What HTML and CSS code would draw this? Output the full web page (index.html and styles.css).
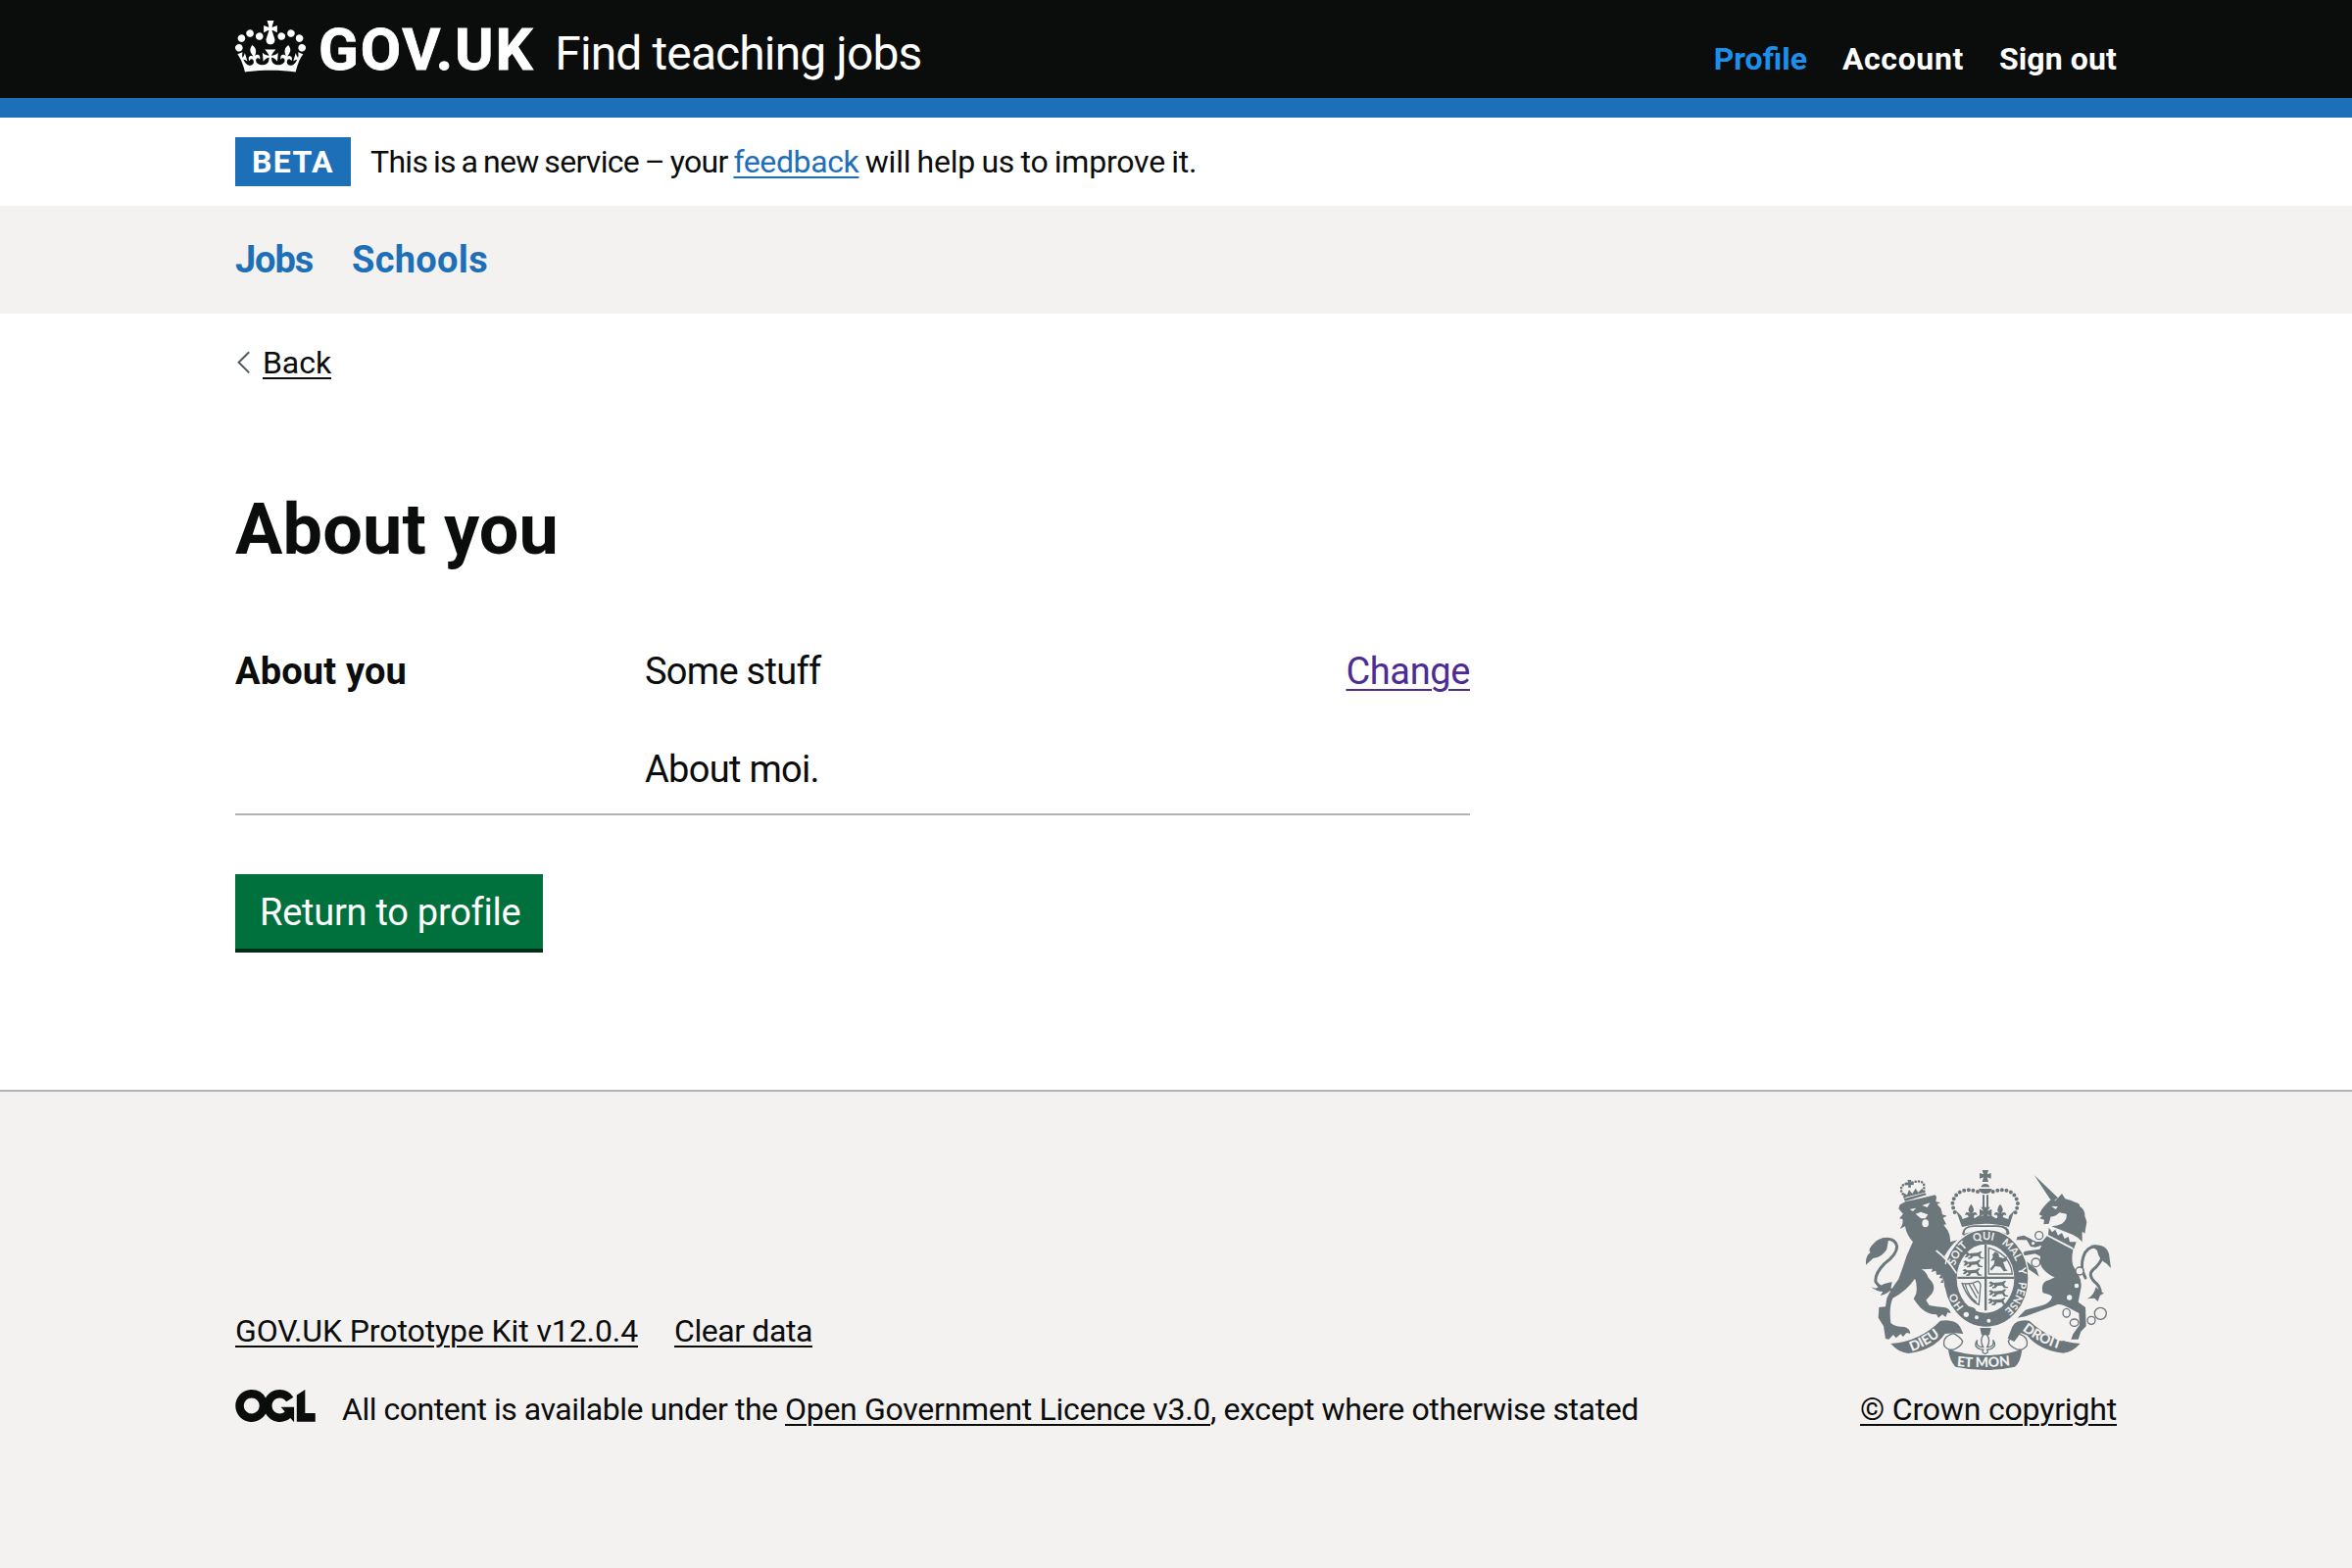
FILE: index.html
```html
<!DOCTYPE html>
<html lang="en">
<head>
<meta charset="utf-8">
<title>About you – Find teaching jobs</title>
<link rel="stylesheet" href="styles.css">
</head>
<body>
<header class="header">
  <div class="container header-inner">
    <a class="logo" href="#">
      <svg class="crown" viewBox="0 0 132 97" aria-hidden="true"><path fill="currentColor" fill-rule="evenodd" d="M25 30.2c3.5 1.5 7.7-.2 9.1-3.7 1.5-3.6-.2-7.8-3.9-9.2-3.6-1.4-7.6.3-9.1 3.9-1.4 3.5.3 7.5 3.9 9zM9 39.5c3.6 1.5 7.8-.2 9.2-3.7 1.5-3.6-.2-7.8-3.9-9.1-3.6-1.5-7.6.2-9.1 3.8-1.4 3.5.3 7.5 3.8 9zM4.4 57.2c3.5 1.5 7.7-.2 9.1-3.8 1.5-3.6-.2-7.7-3.9-9.1-3.5-1.5-7.6.3-9.1 3.8-1.4 3.5.3 7.6 3.9 9.1zm38.3-21.4c3.5 1.5 7.7-.2 9.1-3.8 1.5-3.6-.2-7.7-3.9-9.1-3.6-1.5-7.6.3-9.1 3.8-1.3 3.6.4 7.7 3.9 9.1zm64.4-5.6c-3.6 1.5-7.8-.2-9.1-3.7-1.5-3.6.2-7.8 3.8-9.2 3.6-1.4 7.7.3 9.2 3.9 1.3 3.5-.4 7.5-3.9 9zm15.9 9.3c-3.6 1.5-7.7-.2-9.1-3.7-1.5-3.6.2-7.8 3.7-9.1 3.6-1.5 7.7.2 9.2 3.8 1.5 3.5-.3 7.5-3.8 9zm4.7 17.7c-3.6 1.5-7.8-.2-9.2-3.8-1.5-3.6.2-7.7 3.9-9.1 3.6-1.5 7.7.3 9.2 3.8 1.3 3.5-.4 7.6-3.9 9.1zM89.3 35.8c-3.6 1.5-7.8-.2-9.2-3.8-1.4-3.6.2-7.7 3.9-9.1 3.6-1.5 7.7.3 9.2 3.8 1.4 3.6-.3 7.7-3.9 9.1zM69.7 17.7l8.9 4.7V9.3l-8.9 2.8c-.2-.3-.5-.6-.9-.9L72.4 0H59.6l3.5 11.2c-.3.3-.6.5-.9.9l-8.8-2.8v13.1l8.8-4.7c.3.3.6.7.9.9l-5 15.4v.1c-.2.8-.4 1.6-.4 2.4 0 4.1 3.1 7.5 7 8.1h.2c.3 0 .7.1 1 .1.4 0 .7 0 1-.1h.2c4-.6 7.1-4.1 7.1-8.1 0-.8-.1-1.7-.4-2.4V34l-5.1-15.4c.4-.2.7-.6 1-.9zM66 92.8c16.9 0 32.8 1.1 47.1 3.2 4-16.9 8.9-26.7 14-33.5l-9.6-3.4c1 4.9 1.1 7.2 0 10.2-1.5-1.4-3-4.3-4.2-8.7L108.6 76c2.8-2 5-3.2 7.5-3.3-4.4 9.4-10 11.9-13.6 11.2-4.3-.8-6.3-4.6-5.6-7.9 1-4.7 5.7-5.9 8-.5 4.3-8.7-3-11.4-7.6-8.8 7.1-7.2 7.9-13.5 2.1-21.1-8 6.1-8.1 12.3-4.5 20.8-4.7-5.4-12.1-2.5-9.5 6.2 3.4-5.2 7.9-2 7.2 3.1-.6 4.3-6.4 7.8-13.5 7.2-10.3-.9-10.9-8-11.2-13.8 2.5-.5 7.1 1.8 11 7.3L80.2 60c-4.1 4.4-8 5.3-12.3 5.4 1.4-4.4 8-11.6 8-11.6H55.5s6.4 7.2 7.9 11.6c-4.2-.1-8-1-12.3-5.4l1.4 16.4c3.9-5.5 8.5-7.7 10.9-7.3-.3 5.8-.9 12.8-11.1 13.8-7.2.6-12.9-2.9-13.5-7.2-.7-5 3.8-8.3 7.1-3.1 2.7-8.7-4.6-11.6-9.4-6.2 3.7-8.5 3.6-14.7-4.6-20.8-5.8 7.6-5 13.9 2.2 21.1-4.7-2.6-11.9.1-7.7 8.8 2.3-5.5 7.1-4.2 8.1.5.7 3.3-1.3 7.1-5.7 7.9-3.5.7-9-1.8-13.5-11.2 2.5.1 4.7 1.3 7.5 3.3l-4.7-15.4c-1.2 4.4-2.7 7.2-4.3 8.7-1.1-3-.9-5.3 0-10.2l-9.5 3.4c5 6.9 9.9 16.7 14 33.5 14.8-2.1 30.8-3.2 47.7-3.2z"/></svg>
      <span class="logo-text">GOV.UK</span>
      <span class="service">Find teaching jobs</span>
    </a>
    <nav class="account-nav">
      <a class="current" href="#">Profile</a>
      <a class="account" href="#">Account</a>
      <a href="#">Sign out</a>
    </nav>
  </div>
</header>

<div class="container phase">
  <strong class="tag">BETA</strong>
  <p class="phase-text"><span class="intro">This is a new service – your </span><a href="#">feedback</a><span class="outro"> will help us to improve it.</span></p>
</div>

<nav class="primary">
  <div class="container primary-inner">
    <a class="jobs" href="#">Jobs</a>
    <a class="schools" href="#">Schools</a>
  </div>
</nav>

<main class="container main">
  <div class="back">
    <svg class="chevron" viewBox="0 0 14 24" aria-hidden="true"><path d="M12.2 1.2 1.6 11.8 12.2 22.4" fill="none" stroke="#505a5f" stroke-width="2"/></svg>
    <a href="#">Back</a>
  </div>
  <h1>About you</h1>
  <dl class="summary">
    <dt>About you</dt>
    <dd class="value"><p>Some stuff</p><p>About moi.</p></dd>
    <dd class="action"><a href="#">Change</a></dd>
  </dl>
  <a class="button" href="#">Return to profile</a>
</main>

<footer class="footer">
  <div class="container footer-inner">
    <div class="meta">
      <div class="links">
        <a class="kit" href="#">GOV.UK Prototype Kit v12.0.4</a>
        <a class="clear" href="#">Clear data</a>
      </div>
      <div class="licence">
        <svg class="ogl" viewBox="0 0 483.2 195.7" aria-hidden="true"><path fill="currentColor" d="M421.5 142.8V.1l-50.7 32.3v161.1h112.4v-50.7zm-122.3-9.6A47.12 47.12 0 0 1 221 97.8c0-26 21.1-47.1 47.1-47.1 16.7 0 31.4 8.7 39.7 21.8l42.7-27.2A97.63 97.63 0 0 0 268.1 0c-36.5 0-68.3 20.1-85.1 49.7A98 98 0 0 0 97.8 0C43.9 0 0 43.9 0 97.8s43.9 97.8 97.8 97.8c36.5 0 68.3-20.1 85.1-49.7a97.76 97.76 0 0 0 149.6 25.4l19.4 22.2h3v-87.8h-80l24.3 27.5zM97.8 145c-26 0-47.1-21.1-47.1-47.1s21.1-47.1 47.1-47.1 47.1 21.1 47.1 47.1S123.8 145 97.8 145"/></svg>
        <p><span class="avail">All content is available under the </span><a class="ogl-link" href="#">Open Government Licence v3.0</a><span class="except">, except where otherwise stated</span></p>
      </div>
    </div>
    <div class="copyright">
      <svg class="crest" viewBox="72 42 750 612" aria-hidden="true">
        <defs>
          <path id="garter" d="M440 491A101 118 0 0 1 440 255A101 118 0 0 1 440 491"/>
          <path id="dieu" d="M212 597Q275 575 322 528"/>
          <path id="droit" d="M550 532Q600 572 680 594"/>
          <path id="mon" d="M350 642Q436 650 530 638"/>
          <path id="passant" d="M0 8q4-8 10-4l4 3 26-2 10-5 3 2-6 8 4 8 8 2v3h-12l-6-8-14 1-6 7-10 1v-4l7-3-2-5-9 7-7-1 7-8z"/>
          <path id="lis" d="M0-22q-15 17-3 28-14-9-16 7 8-6 11 3l-3 8h22l-3-8q3-9 11-3-2-16-16-7 12-11-3-28z"/>
        </defs>
        <g class="ink">
          <!-- central crown -->
          <path d="M428 42h19l-4 13 12-4v17l-12-4 4 14h-19l4-14-12 4V51l12 4z"/>
          <path d="M424 94a14 14 0 0 1 27 0zM417 99h41q-2 15-20 15t-21-15zM429 118h6v40h-6zM441 118h6v40h-6z"/>
          <g class="beads">
            <path d="M414 108Q388 98 366 106 340 118 337 146 340 166 350 182"/>
            <path d="M461 108Q487 98 509 106 534 118 537 146 534 166 524 182"/>
          </g>
          <path d="M348 166 366 216Q438 196 510 216L526 166 510 182 508 192 490 186 470 190 454 180 438 184 420 180 404 190 384 186 368 192 364 182z"/>
          <use href="#lis" x="394" y="168"/><use href="#lis" x="483" y="168"/>
          <path d="M424 155h28l-8 12 13-6v22l-13-5 6 14h-24l6-14-12 5v-22l12 6z"/>
          <!-- lion -->
          <g class="beads small"><path d="M190 124 179 104Q180 84 202 83M214 80Q244 70 250 88L250 112"/></g>
          <path d="M188 130 254 112 257 118 192 137zM199 72 211 72 209 80 218 78 218 88 209 87 210 95 201 95 202 88 194 88 195 79 202 80z"/>
          <path d="M190 126 186 112 198 118 204 102 214 114 224 98 232 110 244 98 252 110z"/>
          <path d="M172 160 176 148 194 138 240 128 284 118 288 124 286 138 300 142 290 146 302 160 306 178 320 182 308 188 318 208 310 210 322 226Q332 244 330 262L352 256Q334 272 322 290L312 306 330 330Q344 348 344 376L348 392 338 384 334 398 326 386 316 402 312 388 300 386 308 374 296 372 302 362 288 362 286 350 272 354 276 344 242 346Q256 352 262 370L274 384Q286 402 274 420L256 440 266 456Q290 460 310 462 328 464 332 480L322 478 316 492 306 484 294 494 288 484Q262 484 240 464 228 452 218 436L226 420Q230 392 222 374 196 412 154 434 142 462 148 510 160 522 190 522 206 526 208 542L196 540 186 552 178 544 164 556 156 546 142 560 132 558 126 520 110 494 112 462 132 460 136 434Q148 408 172 376L186 336Q196 300 216 262 196 240 192 214L176 222Q188 206 184 192L174 190 186 176z"/>
          <path class="cord" d="M150 408Q116 408 102 384 98 360 129 328 167 300 167 276 163 254 139 253 119 253 105 267"/>
          <path d="M142 250Q116 246 96 266 76 286 86 294 70 304 72 332L94 312Q122 308 136 284zM88 400 102 404 128 390 152 384 148 406Q140 422 116 426L124 414Q104 414 88 400z"/>
          <!-- unicorn -->
          <path d="M587 57 660 127 642 140z"/>
          <path d="M672 114 682 130Q700 134 712 140 728 144 726 152 744 164 742 182L748 200 742 236 734 230 734 262 722 250 706 240 640 214Q658 212 672 206 690 192 686 176L664 172Q652 186 638 184L632 206 616 208 618 194 604 190 612 182 602 178Q610 160 622 148L636 134 652 136z"/>
          <path d="M626 244 706 286Q700 316 706 334L724 366Q734 384 730 404L722 446 744 462 746 520 730 536 722 560 700 560 706 544 726 516 724 480 690 462Q664 448 652 456L560 490 536 494 560 470 612 456Q638 448 642 430 640 424 614 418 604 384 634 378L650 370Q630 362 614 344 602 330 606 306L590 298 556 304 560 318 594 346 602 368 586 356 568 344 550 322 546 300 560 290 604 284 610 272 590 278 576 276 564 256 532 256 536 246 556 242 576 252 590 262 612 260z"/>
          <path class="cord" d="M744 372Q726 340 738 306 748 276 776 276 804 290 796 308 788 330 768 346 750 362 772 384 790 396 790 420"/>
          <path d="M760 272Q808 266 816 298L822 342 808 328Q784 316 780 288zM748 436Q768 430 776 400L788 412 802 420 790 422 782 444 772 434z"/>
          <path d="M366 238Q368 212 402 211H478Q510 212 512 236L498 246H376z"/>
        </g>
        <!-- garter and shield -->
        <ellipse class="band" cx="440" cy="373" rx="130" ry="150"/>
        <ellipse class="paper-fill" cx="438" cy="374" rx="88" ry="105"/>
        <path class="paper-fill" d="M374 237Q372 217 402 216H474Q504 217 502 236 438 214 374 237z"/>
        <g class="ink">
          <path d="M435 270h7v202h-7zM352 368h174v7H352z"/>
          <path class="line" d="M448 280Q514 300 520 360H448z"/>
          <use href="#passant" x="374" y="290"/><use href="#passant" x="370" y="316"/><use href="#passant" x="368" y="342"/>
          <use href="#passant" x="448" y="380"/><use href="#passant" x="448" y="406"/><use href="#passant" x="446" y="432"/>
          <path d="M458 302 468 292 478 298 480 308 494 312 504 306 502 320 492 324 500 344 506 350 494 352 484 338 468 336 456 350 452 344 464 330 466 318 454 320 462 306z"/>
          <path class="line" d="M364 388Q390 394 414 382 426 386 422 404L418 454Q386 442 366 388M376 392Q386 430 410 446M388 391 412 434M400 390 416 420"/>
          <path d="M363 468Q379 454 397 462 409 464 409 476 391 494 379 502 367 494 363 468z"/>
          <path d="M300 330 330 330 344 376 348 396 338 386 332 400 326 388 314 402z"/>
        </g>
        <g class="paper-fill">
          <circle cx="411" cy="493" r="6"/><circle cx="448" cy="503" r="6"/><circle cx="379" cy="484" r="8"/>
          <ellipse cx="254" cy="205" rx="10" ry="12"/><path d="M224 176 240 170 262 178 254 190 240 190zM206 162 226 158 216 168zM244 150 268 142 260 156z"/>
          <path d="M640 152 660 154 652 162z"/>
        </g>
        <g class="rings">
          <circle cx="602" cy="242" r="12"/><circle cx="584" cy="266" r="7"/><circle cx="592" cy="325" r="13"/><circle cx="726" cy="351" r="12"/>
          <circle cx="717" cy="396" r="9"/><circle cx="695" cy="432" r="10"/><ellipse cx="686" cy="479" rx="11" ry="13"/><ellipse cx="710" cy="509" rx="13" ry="11"/>
          <circle cx="762" cy="502" r="12"/><circle cx="790" cy="481" r="18"/>
        </g>
        <!-- unicorn's coronet collar -->
        <path class="ink" d="M630 240 632 218 642 232 652 224 660 242 672 234 680 252 692 246 696 262 716 262 708 284 704 278z"/>
        <path class="paper-line" d="M287 288Q325 318 349 358"/>
        <g class="motto">
          <text><textPath href="#garter" startOffset="11%">HO</textPath></text>
          <text><textPath href="#garter" startOffset="30.5%">SOIT</textPath></text>
          <text><textPath href="#garter" startOffset="44.5%">QUI</textPath></text>
          <text><textPath href="#garter" startOffset="57%">MAL</textPath></text>
          <text><textPath href="#garter" startOffset="70.5%">Y</textPath></text>
          <text><textPath href="#garter" startOffset="76.5%">PENSE</textPath></text>
        </g>
        <!-- motto ribbon -->
        <g class="ink">
          <path d="M148 573Q236 567 300 503 344 497 360 521L370 543 344 541 314 543Q280 593 202 603 172 601 148 573zM728 573Q640 567 572 503 534 497 520 521L506 557 526 567 546 540 566 548Q600 592 676 602 704 600 728 573z"/>
          <path d="M324 590Q376 608 436 609 498 609 550 590 546 630 528 644 438 664 346 644 328 626 324 590z"/>
          <path class="line" d="M340 542Q304 552 312 580 324 596 344 590 366 580 368 566 360 552 340 542M536 542Q572 552 564 580 552 596 532 590 510 580 508 566 516 552 536 542"/>
          <path d="M421 525h34l-5 22h-24z"/>
          <path class="line" d="M437 540Q417 560 431 584 407 584 413 562 399 582 421 590L431 592Q425 602 437 604 449 602 443 592L453 590Q475 582 461 562 467 584 443 584 457 560 437 540z"/>
        </g>
        <g class="motto ribbon">
          <text><textPath href="#dieu">DIEU</textPath></text>
          <text><textPath href="#droit">DROIT</textPath></text>
          <text><textPath href="#mon">ET MON</textPath></text>
        </g>
      </svg>
      <a href="#">© Crown copyright</a>
    </div>
  </div>
</footer>
</body>
</html>
```
FILE: styles.css
```css
* { box-sizing: border-box; }
body, h1, p, dl, dd { margin: 0; }
body {
  font-family: Roboto, "Liberation Sans", sans-serif;
  font-size: 32px;
  line-height: 40px;
  color: #0b0c0c;
  background: #fff;
  min-height: 1600px;
  display: flex;
  flex-direction: column;
}
a { color: inherit; text-decoration-thickness: 2px; text-underline-offset: 4px; }
.container { width: 1920px; margin: 0 auto; }

.header { background: #0b0c0c; color: #fff; border-bottom: 20px solid #1d70b8; height: 120px; }
.header a { text-decoration: none; }
.header-inner { display: flex; justify-content: space-between; align-items: baseline; padding-top: 21px; }
.logo { display: flex; align-items: baseline; }
.crown { width: 72px; height: 53px; align-self: flex-start; }
.logo-text { font-size: 60px; line-height: 60px; font-weight: 700; letter-spacing: 0.03em; margin: 0 21px 0 13px; -webkit-text-stroke: 0.8px; }
.service { font-size: 48px; line-height: 60px; letter-spacing: -0.0187em; }
.account-nav { display: flex; gap: 36px; font-weight: 700; letter-spacing: 0.0035em; }
.account { letter-spacing: 0.0197em; }
.current { color: #1d8feb; letter-spacing: 0; }

.phase { display: flex; align-items: center; height: 90px; }
.tag { background: #1d70b8; color: #fff; width: 118px; height: 50px; line-height: 50px; text-align: center; letter-spacing: 0.044em; margin-right: 20px; }
.phase-text { line-height: 50px; white-space: pre; }
.phase-text a { color: #1d70b8; letter-spacing: -0.012em; }
.intro { letter-spacing: -0.7px; word-spacing: -1.5px; }
.outro { letter-spacing: -0.19px; word-spacing: -1.5px; }

.primary { background: #f3f2f1; }
.primary-inner { display: flex; gap: 40px; font-size: 38px; font-weight: 700; line-height: 110px; color: #1d70b8; }
.primary a { text-decoration: none; }
.jobs { letter-spacing: -0.03em; }
.schools { letter-spacing: 0.0077em; }

.main { padding: 30px 0 144px; }
.back { display: flex; align-items: center; letter-spacing: -0.002em; }
.chevron { width: 14px; height: 24px; margin: 0 12px 0 2px; }
h1 { font-size: 72px; line-height: 80px; font-weight: 700; margin: 111px 0 79px; letter-spacing: 0.002em; }
.summary { width: 1260px; display: grid; grid-template-columns: 418px 1fr auto; border-bottom: 2px solid #b1b4b6; padding-bottom: 20px; font-size: 38px; line-height: 50px; margin-bottom: 60px; }
dt { font-weight: 700; letter-spacing: 0.0043em; }
.value { display: grid; gap: 50px; letter-spacing: -0.0185em; }
.action { color: #4c2c92; letter-spacing: -0.01em; }
.action a { text-underline-offset: 5px; }
.button { display: inline-block; background: #00703c; color: #fff; box-shadow: 0 4px 0 #002d18; font-size: 38px; line-height: 50px; padding: 14px 0 12px 25px; width: 314px; height: 76px; text-decoration: none; letter-spacing: -0.0067em; white-space: nowrap; vertical-align: top; }

.footer { flex: 1; background: #f3f2f1; border-top: 2px solid #b1b4b6; padding-top: 80px; }
.footer-inner { display: flex; justify-content: space-between; align-items: flex-end; }
.meta { display: grid; gap: 40px; }
.links { display: flex; gap: 37px; }
.kit { letter-spacing: -0.0033em; }
.clear { letter-spacing: -0.0128em; }
.licence { display: flex; }
.licence p { white-space: pre; }
.ogl { width: 82px; height: 33px; margin-right: 27px; }
.avail { letter-spacing: -0.0146em; }
.ogl-link { letter-spacing: -0.0092em; }
.except { letter-spacing: -0.0116em; }
.copyright { display: flex; flex-direction: column; width: 262px; letter-spacing: -0.0055em; white-space: nowrap; }
.crest { width: 250px; height: 204px; margin: 0 0 20px 6px; }

.ink { fill: #6b777b; }
.line { fill: none; stroke: #6b777b; stroke-width: 4; }
.cord { fill: none; stroke: #6b777b; stroke-width: 9; stroke-linecap: round; }
.beads { fill: none; stroke: #6b777b; stroke-width: 12; stroke-linecap: round; stroke-dasharray: 0 14; }
.small { stroke-width: 8; stroke-dasharray: 0 10; }
.rings { fill: #f3f2f1; stroke: #6b777b; stroke-width: 4; }
.band { fill: #6b777b; stroke: #f3f2f1; stroke-width: 4; }
.paper-fill { fill: #f3f2f1; }
.paper-line { fill: none; stroke: #f3f2f1; stroke-width: 5; }
.motto { fill: #f3f2f1; font: 700 33px Lato, sans-serif; }
.ribbon { font-size: 42px; font-weight: 900; }
```
